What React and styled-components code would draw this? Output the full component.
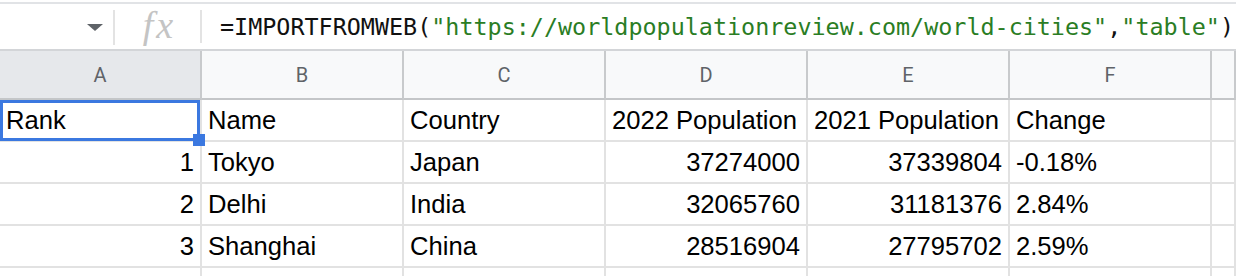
import React from 'react';
import styled, { createGlobalStyle } from 'styled-components';

const GlobalStyle = createGlobalStyle`
  html, body {
    margin: 0;
    padding: 0;
    background: #ffffff;
  }
  body {
    width: 1236px;
    height: 276px;
    overflow: hidden;
  }
`;

const Sheet = styled.div`
  width: 1236px;
  height: 276px;
  overflow: hidden;
  padding-top: 2px;
  box-sizing: border-box;
  background: #ffffff;
`;

const FormulaBar = styled.div`
  display: flex;
  align-items: center;
  height: 45px;
  border-top: 2px solid #e1e3e6;
  border-bottom: 2px solid #d3d5d8;
`;

const NameBox = styled.div`
  width: 113px;
  height: 100%;
  display: flex;
  align-items: center;
  justify-content: flex-end;
  padding-right: 10px;
  box-sizing: border-box;
`;

const Caret = styled.span`
  width: 0;
  height: 0;
  margin-top: 2px;
  border-left: 8px solid transparent;
  border-right: 8px solid transparent;
  border-top: 7px solid #5f6368;
`;

const Divider = styled.div`
  width: 2px;
  height: ${(p) => p.$h || 35}px;
  align-self: flex-start;
  margin-top: 6px;
  background: #e3e3e3;
`;

const FxBox = styled.div`
  width: 85px;
  display: flex;
  justify-content: center;
`;

const FxLabel = styled.span`
  font-family: 'Liberation Serif', serif;
  font-style: italic;
  font-size: 38px;
  line-height: 1;
  letter-spacing: 3px;
  color: #c4c4c4;
  margin-left: 4px;
  margin-top: -3px;
`;

const FormulaText = styled.div`
  padding-left: 18px;
  font-family: 'DejaVu Sans Mono', 'Liberation Mono', monospace;
  font-size: 23.4px;
  color: #111111;
  white-space: nowrap;
`;

const Str = styled.span`
  color: #2a7d24;
`;

const Grid = styled.div`
  display: grid;
  grid-template-columns: repeat(6, 202px) 1fr;
`;

const HeaderCell = styled.div`
  height: 49px;
  box-sizing: border-box;
  display: flex;
  align-items: center;
  justify-content: center;
  border-right: 2px solid #c8cacc;
  border-bottom: 2px solid #c4c6c8;
  background: ${(p) => (p.$active ? '#e6e8eb' : '#f8f9fa')};
  font-family: Roboto, 'Liberation Sans', sans-serif;
  font-size: 20px;
  color: #5f6368;
`;

const Cell = styled.div`
  position: relative;
  height: 42px;
  box-sizing: border-box;
  padding: 0 6px 0 6px;
  border-right: 2px solid #e2e2e2;
  border-bottom: 2px solid #e2e2e2;
  font-family: 'Liberation Sans', Arial, sans-serif;
  font-size: 25.6px;
  line-height: 41px;
  color: #000000;
  text-align: ${(p) => (p.$num ? 'right' : 'left')};
  white-space: nowrap;
`;

const Selection = styled.div`
  position: absolute;
  top: 0;
  left: 0;
  width: 200px;
  height: 41px;
  box-sizing: border-box;
  border: 3px solid #3b78e0;
  z-index: 2;
  pointer-events: none;
`;

const Handle = styled.div`
  position: absolute;
  left: 193px;
  top: 34px;
  width: 12px;
  height: 12px;
  background: #3b78e0;
  z-index: 3;
`;

const columns = ['A', 'B', 'C', 'D', 'E', 'F', ''];

const rows = [
  ['Rank', 'Name', 'Country', '2022 Population', '2021 Population', 'Change'],
  [1, 'Tokyo', 'Japan', 37274000, 37339804, '-0.18%'],
  [2, 'Delhi', 'India', 32065760, 31181376, '2.84%'],
  [3, 'Shanghai', 'China', 28516904, 27795702, '2.59%'],
  ['', '', '', '', '', ''],
];

const App = () => {
  return (
    <>
      <GlobalStyle />
      <Sheet>
        <FormulaBar>
          <NameBox>
            <Caret />
          </NameBox>
          <Divider />
          <FxBox>
            <FxLabel>fx</FxLabel>
          </FxBox>
          <Divider $h={33} />
          <FormulaText>
            =IMPORTFROMWEB(<Str>"https://worldpopulationreview.com/world-cities"</Str>,
            <Str>"table"</Str>)
          </FormulaText>
        </FormulaBar>
        <Grid>
          {columns.map((c, i) => (
            <HeaderCell key={i} $active={c === 'A'}>
              {c}
            </HeaderCell>
          ))}
          {rows.map((row, r) => (
            <React.Fragment key={r}>
              {row.map((v, c) => (
                <Cell key={c} $num={typeof v === 'number'}>
                  {v}
                  {r === 0 && c === 0 && (
                    <>
                      <Selection />
                      <Handle />
                    </>
                  )}
                </Cell>
              ))}
              <Cell />
            </React.Fragment>
          ))}
        </Grid>
      </Sheet>
    </>
  );
};

export default App;
